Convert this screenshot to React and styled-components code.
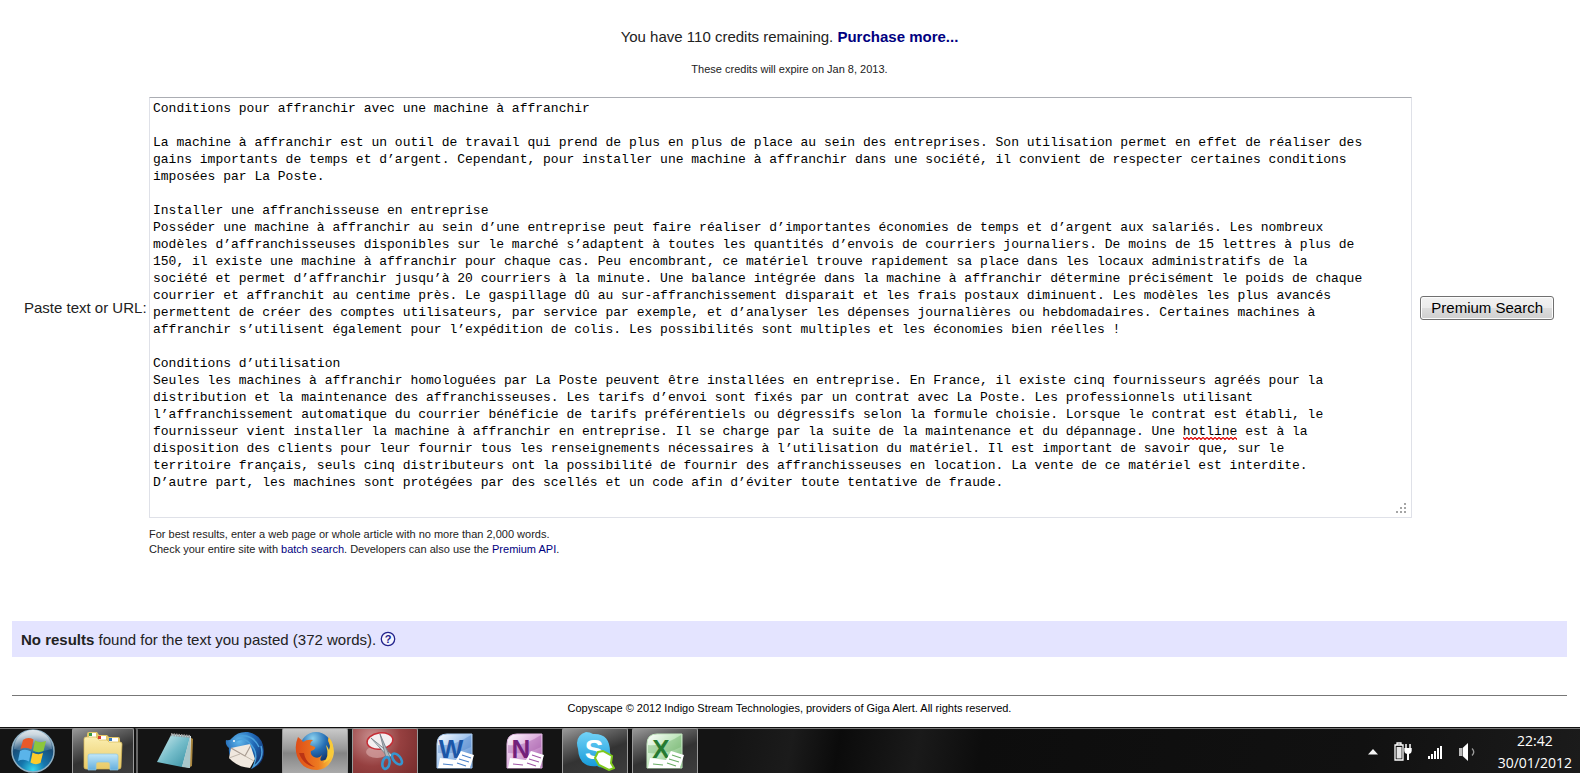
import { useState } from "react";
import styled, { createGlobalStyle, css } from "styled-components";

const ARTICLE = `Conditions pour affranchir avec une machine à affranchir

La machine à affranchir est un outil de travail qui prend de plus en plus de place au sein des entreprises. Son utilisation permet en effet de réaliser des
gains importants de temps et d’argent. Cependant, pour installer une machine à affranchir dans une société, il convient de respecter certaines conditions
imposées par La Poste.

Installer une affranchisseuse en entreprise
Posséder une machine à affranchir au sein d’une entreprise peut faire réaliser d’importantes économies de temps et d’argent aux salariés. Les nombreux
modèles d’affranchisseuses disponibles sur le marché s’adaptent à toutes les quantités d’envois de courriers journaliers. De moins de 15 lettres à plus de
150, il existe une machine à affranchir pour chaque cas. Peu encombrant, ce matériel trouve rapidement sa place dans les locaux administratifs de la
société et permet d’affranchir jusqu’à 20 courriers à la minute. Une balance intégrée dans la machine à affranchir détermine précisément le poids de chaque
courrier et affranchit au centime près. Le gaspillage dû au sur-affranchissement disparait et les frais postaux diminuent. Les modèles les plus avancés
permettent de créer des comptes utilisateurs, par service par exemple, et d’analyser les dépenses journalières ou hebdomadaires. Certaines machines à
affranchir s’utilisent également pour l’expédition de colis. Les possibilités sont multiples et les économies bien réelles !

Conditions d’utilisation
Seules les machines à affranchir homologuées par La Poste peuvent être installées en entreprise. En France, il existe cinq fournisseurs agréés pour la
distribution et la maintenance des affranchisseuses. Les tarifs d’envoi sont fixés par un contrat avec La Poste. Les professionnels utilisant
l’affranchissement automatique du courrier bénéficie de tarifs préférentiels ou dégressifs selon la formule choisie. Lorsque le contrat est établi, le
fournisseur vient installer la machine à affranchir en entreprise. Il se charge par la suite de la maintenance et du dépannage. Une hotline est à la
disposition des clients pour leur fournir tous les renseignements nécessaires à l’utilisation du matériel. Il est important de savoir que, sur le
territoire français, seuls cinq distributeurs ont la possibilité de fournir des affranchisseuses en location. La vente de ce matériel est interdite.
D’autre part, les machines sont protégées par des scellés et un code afin d’éviter toute tentative de fraude.
`;

const LINE = 17;

function locate(text, word) {
    const lines = text.split("\n");
    const row = lines.findIndex(line => line.includes(word));
    if (row < 0) return null;
    return { row, col: lines[row].indexOf(word), length: word.length };
}

export default function App() {
    const [text, setText] = useState(ARTICLE);
    const typo = locate(text, "hotline");

    return (
        <Page>
            <GlobalStyle />
            <Main>
                <Credits>You have 110 credits remaining. <BoldLink href="#purchase">Purchase more...</BoldLink></Credits>
                <Expiry>These credits will expire on Jan 8, 2013.</Expiry>

                <SearchForm onSubmit={e => e.preventDefault()}>
                    <FieldLabel htmlFor="content">Paste text or URL:</FieldLabel>
                    <TextWrap>
                        <TextBox
                            id="content"
                            wrap="off"
                            spellCheck={false}
                            value={text}
                            onChange={e => setText(e.target.value)}
                        />
                        {typo &&
                            <Squiggle style={{
                                left: `calc(4px + ${typo.col}ch)`,
                                top: `${(typo.row + 1) * LINE}px`,
                                width: `${typo.length}ch`
                            }}>
                                <svg width="100%" height="3">
                                    <defs>
                                        <pattern id="wave" width="4" height="3" patternUnits="userSpaceOnUse">
                                            <path d="M-1 -.5 L2 2.5 L5 -.5" fill="none" stroke="#d00" strokeWidth="1.2" />
                                        </pattern>
                                    </defs>
                                    <rect width="100%" height="3" fill="url(#wave)" />
                                </svg>
                            </Squiggle>
                        }
                        <Grip />
                    </TextWrap>
                    <SearchButton type="submit">Premium Search</SearchButton>
                    <Notes>
                        For best results, enter a web page or whole article with no more than 2,000 words.<br />
                        Check your entire site with <Link href="#batch">batch search</Link>. Developers can also use the <Link href="#api">Premium API</Link>.
                    </Notes>
                </SearchForm>

                <Results>
                    <span><b>No results</b> found for the text you pasted (372 words).</span>
                    <HelpLink href="#help" aria-label="Help">
                        <svg width="16" height="16" viewBox="0 0 16 16">
                            <circle cx="8" cy="8" r="6.7" fill="#f4f4ff" stroke="#22228c" strokeWidth="1.3" />
                            <text x="8" y="12" textAnchor="middle" fontSize="11" fontWeight="bold" fill="#22228c">?</text>
                        </svg>
                    </HelpLink>
                </Results>

                <Footer>Copyscape © 2012 Indigo Stream Technologies, providers of Giga Alert. All rights reserved.</Footer>
            </Main>
            <Taskbar />
        </Page>
    );
}

function Grip() {
    const dots = [[8, 0], [4, 4], [8, 4], [0, 8], [4, 8], [8, 8]];
    return (
        <GripIcon width="11" height="11" viewBox="0 0 11 11">
            {dots.map(([x, y]) => <rect key={`${x}-${y}`} x={x} y={y} width="2" height="2" fill="#a5a5a5" />)}
        </GripIcon>
    );
}

function Taskbar() {
    return (
        <Bar>
            <StartButton aria-label="Start"><StartIcon /></StartButton>
            <Apps>
                <AppButton $tone="open" $stacked aria-label="Explorer"><ExplorerIcon /></AppButton>
                <AppButton aria-label="Notepad"><NotepadIcon /></AppButton>
                <AppButton aria-label="Thunderbird"><ThunderbirdIcon /></AppButton>
                <AppButton $tone="active" aria-label="Firefox"><FirefoxIcon /></AppButton>
                <AppButton $tone="red" aria-label="Snipping Tool"><SnipIcon /></AppButton>
                <AppButton aria-label="Word"><WordIcon /></AppButton>
                <AppButton aria-label="OneNote"><OneNoteIcon /></AppButton>
                <AppButton $tone="open" aria-label="Skype"><SkypeIcon /></AppButton>
                <AppButton $tone="open" aria-label="Excel"><ExcelIcon /></AppButton>
            </Apps>
            <Tray>
                <TrayButton aria-label="Show hidden icons">
                    <svg width="10" height="6" viewBox="0 0 10 6"><path d="M5 0 L10 5.5 H0 Z" fill="#f4f4f4" /></svg>
                </TrayButton>
                <TrayButton aria-label="Battery">
                    <svg width="18" height="20" viewBox="0 0 18 20">
                        <path d="M3 3 V1 H7 V3 M1 3 H9 V18 H1 Z" fill="none" stroke="#fff" strokeWidth="1.3" />
                        <rect x="2.6" y="5" width="5" height="11.5" fill="#e4e4e4" />
                        <path d="M12 2 V6 M16 2 V6" stroke="#fff" strokeWidth="1.5" />
                        <path d="M10.3 6 H17.7 V9 Q17.7 11.5 15 12 V18 H13 V12 Q10.3 11.5 10.3 9 Z" fill="#fff" />
                    </svg>
                </TrayButton>
                <TrayButton aria-label="Network">
                    <svg width="15" height="14" viewBox="0 0 15 14">
                        {[3, 5, 8, 11, 13].map((h, i) => <rect key={h} x={i * 3} y={14 - h} width="2" height={h} fill="#fff" />)}
                    </svg>
                </TrayButton>
                <TrayButton aria-label="Volume">
                    <svg width="17" height="18" viewBox="0 0 17 18">
                        <path d="M0 5 H3 V13 H0 Z" fill="#bbb" />
                        <path d="M3.6 5 L9 0 V18 L3.6 13 Z" fill="#fff" />
                        <path d="M13 5.5 Q16.5 9 13 12.5" fill="none" stroke="#999" strokeWidth="1.3" />
                    </svg>
                </TrayButton>
                <Clock>
                    <span>22:42</span>
                    <span>30/01/2012</span>
                </Clock>
            </Tray>
        </Bar>
    );
}

function StartIcon() {
    return (
        <svg width="44" height="44" viewBox="0 0 44 44">
            <defs>
                <radialGradient id="orb" cx=".5" cy=".95" r=".85">
                    <stop offset="0" stopColor="#35d6ee" />
                    <stop offset=".35" stopColor="#1576ad" />
                    <stop offset=".75" stopColor="#184d78" />
                    <stop offset="1" stopColor="#7d9bb0" />
                </radialGradient>
                <linearGradient id="gloss" x1="0" y1="0" x2="0" y2="1">
                    <stop offset="0" stopColor="#fff" stopOpacity=".75" />
                    <stop offset="1" stopColor="#fff" stopOpacity=".1" />
                </linearGradient>
            </defs>
            <circle cx="22" cy="22" r="21" fill="url(#orb)" stroke="#8fb0c4" strokeWidth="1.5" />
            <path d="M3 20 A19 19 0 0 1 41 20 Q22 26 3 20 Z" fill="url(#gloss)" />
            <path d="M12 11 Q17 7.500 22.500 10.500 L20.500 20.500 Q15 17.500 9.500 20 Z" fill="#e8592a" />
            <path d="M24 11.500 Q29 14.500 35 12 L32.500 22 Q27 24.500 22 21.500 Z" fill="#8cc63c" />
            <path d="M9 22 Q14.500 19.500 20 22.500 L18 32.500 Q12.500 29.500 7 32 Z" fill="#5ab4ea" />
            <path d="M21.500 23.500 Q27 26.500 32 24 L29.500 34 Q24.500 36.500 19.500 33.500 Z" fill="#fccb2c" />
        </svg>
    );
}

function ExplorerIcon() {
    return (
        <svg width="40" height="40" viewBox="0 0 40 40">
            <defs>
                <linearGradient id="folder" x1="0" y1="0" x2="0" y2="1">
                    <stop offset="0" stopColor="#fbeeb0" />
                    <stop offset="1" stopColor="#e8ca67" />
                </linearGradient>
                <linearGradient id="stand" x1="0" y1="0" x2="0" y2="1">
                    <stop offset="0" stopColor="#c3e8f8" />
                    <stop offset="1" stopColor="#63aede" />
                </linearGradient>
            </defs>
            <path d="M4 3 Q4 1 6 1 H14 L16 4 H24 L26 6 H35 Q37 6 37 8 V33 H4 Z" fill="#e3c767" />
            <rect x="6" y="2" width="7" height="4" fill="#fff" /><rect x="6" y="2" width="3" height="3" fill="#379b46" />
            <rect x="15" y="5" width="8" height="4" fill="#fff" /><rect x="15" y="5" width="3" height="3" fill="#d93c2c" />
            <rect x="26" y="7" width="9" height="4" fill="#fff" /><rect x="26" y="7" width="3" height="3" fill="#3778bd" />
            <path d="M1 8 Q1 6 3 6 H13 L16 9 H24 L26 11 H37 Q39 11 39 13 L38 36 Q38 38 36 38 H3 Q1 38 1 36 Z" fill="url(#folder)" stroke="#d7b957" strokeWidth=".7" />
            <path d="M5 39 V25 Q5 23 7 23 H33 Q35 23 35 25 V39 H27 V33 Q27 31 25 31 H15 Q13 31 13 33 V39 Z" fill="url(#stand)" stroke="#8cc5e4" strokeWidth=".7" />
        </svg>
    );
}

function NotepadIcon() {
    return (
        <svg width="38" height="38" viewBox="0 0 38 38">
            <defs>
                <linearGradient id="pad" x1="0" y1="0" x2="1" y2="1">
                    <stop offset="0" stopColor="#d5edf0" />
                    <stop offset=".5" stopColor="#75bdca" />
                    <stop offset="1" stopColor="#358ea1" />
                </linearGradient>
            </defs>
            <path d="M34 5 L37 7 L36 34 L32 36 Z" fill="#a9853d" />
            <path d="M15 2 L35 4 L34 36 L24 34 Z" fill="#d6e4e6" />
            <path d="M15 3 L34 5 L26 35 L1 30 Z" fill="url(#pad)" />
            <path d="M34 5 L34 36 L26 35 Z" fill="#a9c7ca" />
            <path d="M15 2.500 L34 4.500" stroke="#9e9e9e" strokeWidth="3" strokeDasharray="1.5 1" />
        </svg>
    );
}

function ThunderbirdIcon() {
    return (
        <svg width="40" height="40" viewBox="0 0 40 40">
            <defs>
                <radialGradient id="bird" cx=".35" cy=".25" r=".8">
                    <stop offset="0" stopColor="#62b9ed" />
                    <stop offset=".5" stopColor="#2068b6" />
                    <stop offset="1" stopColor="#122f6c" />
                </radialGradient>
            </defs>
            <path d="M1 9 Q5 10 7 7 Q13 0 23 1 Q38 4 39 20 Q39 34 26 38 Q32 33 31 27 L8 29 Q3 24 4 17 Q0 14 1 9 Z" fill="url(#bird)" />
            <path d="M6 17 L25 13 L30 28 L25 37 Q12 36 4 27 Z" fill="#f0e8df" />
            <path d="M6 17 L20 25 L26 14" fill="none" stroke="#a99c92" strokeWidth="1.2" />
            <path d="M4 27 L15 23 M20 25 L29 30" stroke="#c1b7ac" />
            <path d="M9 11 Q19 4 27 15 Q34 24 28 36 Q40 28 36 15 M14 5 Q28 3 34 16" fill="none" stroke="#4aa0dc" strokeWidth="1.5" />
            <circle cx="9" cy="10" r="1" fill="#fff" />
        </svg>
    );
}

function FirefoxIcon() {
    return (
        <svg width="40" height="40" viewBox="0 0 40 40">
            <defs>
                <radialGradient id="globe" cx=".4" cy=".2" r=".8">
                    <stop offset="0" stopColor="#8bd1ef" />
                    <stop offset=".5" stopColor="#266fb5" />
                    <stop offset="1" stopColor="#102f66" />
                </radialGradient>
                <linearGradient id="fox" x1="0" y1="0" x2="1" y2="0">
                    <stop offset="0" stopColor="#de4d18" />
                    <stop offset=".6" stopColor="#ee7b20" />
                    <stop offset="1" stopColor="#fbd044" />
                </linearGradient>
            </defs>
            <circle cx="21" cy="17" r="16" fill="url(#globe)" />
            <path d="M3 6 Q7 9 8 11 Q12 8 18 9 Q15 11 15 14 L20 16 Q21 18 16 20 Q15 24 19 26 Q24 28 27 24 Q22 33 32 28 Q38 22 34 12 Q32 9 34 6 Q41 18 38 26 Q34 38 22 39 Q7 39 2 25 Q-1 15 3 6 Z" fill="url(#fox)" />
            <path d="M34 7 Q36 14 34 19 Q33 16 31 14 Q35 26 28 32 Q37 29 38 20 Q39 12 34 7 Z" fill="#f9cb37" />
            <path d="M4 22 Q8 34 20 36 Q10 31 9 22 Z" fill="#bb3414" />
        </svg>
    );
}

function SnipIcon() {
    return (
        <svg width="40" height="40" viewBox="0 0 40 40">
            <ellipse cx="12" cy="21" rx="11" ry="6" fill="#d6a4a4" opacity=".7" />
            <ellipse cx="15" cy="10" rx="13" ry="8" transform="rotate(-8 15 10)" fill="#f3eff0" stroke="#c62d35" strokeWidth="1.500" />
            <path d="M6 7 L27 24 L24 27 Z" fill="#d5dade" stroke="#6d7880" strokeWidth=".8" />
            <path d="M15 3 L25 26 L21 27 Z" fill="#aeb7bd" stroke="#6d7880" strokeWidth=".8" />
            <ellipse cx="21" cy="32" rx="3.500" ry="6" transform="rotate(12 21 32)" fill="none" stroke="#3796cf" strokeWidth="2.6" />
            <ellipse cx="32" cy="28" rx="3.500" ry="6.500" transform="rotate(-40 32 28)" fill="none" stroke="#3796cf" strokeWidth="2.6" />
        </svg>
    );
}

// shared tile for the Office programs: coloured page, big letter, sheet in the corner
function OfficeIcon({ id, letter, light, mid, dark }) {
    return (
        <svg width="38" height="36" viewBox="0 0 38 36">
            <defs>
                <linearGradient id={id} x1="0" y1="0" x2="1" y2="1">
                    <stop offset="0" stopColor="#fff" />
                    <stop offset=".45" stopColor={light} />
                    <stop offset="1" stopColor={mid} />
                </linearGradient>
            </defs>
            <path d="M1 35 V11 Q1 1 11 1 H36 V35 Z" fill={`url(#${id})`} stroke={light} />
            <path d="M2 12 Q17 14 35 2 V14 Q20 22 2 20 Z" fill={mid} opacity=".4" />
            <OfficeLetter x="15" y="25" textAnchor="middle" fill={dark}>{letter}</OfficeLetter>
            <path d="M4 25 L20 27 L25 18 L38 22 L34 35 H2 Z" fill="#fff" />
            <path d="M26 22 L35 25 M23 26 L33 29 M21 30 L30 33 M7 31 L17 32" stroke={mid} strokeWidth="1.2" />
        </svg>
    );
}

const WordIcon = () => <OfficeIcon id="word" letter="W" light="#a8c9ef" mid="#4a80c8" dark="#1b57a8" />;
const OneNoteIcon = () => <OfficeIcon id="onenote" letter="N" light="#dfb4e0" mid="#a056a6" dark="#73207b" />;
const ExcelIcon = () => <OfficeIcon id="excel" letter="X" light="#c3e7c0" mid="#69ad65" dark="#267a32" />;

function SkypeIcon() {
    return (
        <svg width="40" height="40" viewBox="0 0 40 40">
            <defs>
                <linearGradient id="skype" x1="0" y1="0" x2="0" y2="1">
                    <stop offset="0" stopColor="#73d3f7" />
                    <stop offset="1" stopColor="#1499d9" />
                </linearGradient>
            </defs>
            <path d="M11 1 Q15 1 18 3 Q35 2 35 21 Q38 31 31 35 Q27 38 22 35 Q4 37 3 18 Q-1 5 11 1 Z" fill="url(#skype)" />
            <SkypeLetter x="19" y="28" textAnchor="middle">S</SkypeLetter>
            <path d="M23 21 L28 20 L37 25 L36 32 L39 37 L34 39 L24 34 L20 27 Z" fill="#fff" stroke="#7fc91c" strokeWidth="2" />
        </svg>
    );
}

const GlobalStyle = createGlobalStyle`
    body{
        margin: 0;
        background: #fff;
        color: #222;
        font-family: "Liberation Sans", Arial, sans-serif;
        font-size: 15px;
    }
    *{
        box-sizing: border-box;
    }
    button, svg text{
        font-family: inherit;
    }
`

const Page = styled.div`
    display: flex;
    flex-direction: column;
    min-height: 100vh;
`

const Main = styled.main`
    flex: 1;
    padding: 28px 13px 0 12px;
`

const Credits = styled.p`
    margin: 0;
    line-height: 18px;
    text-align: center;
`

const Expiry = styled.p`
    margin: 16px 0 20px;
    font-size: 11px;
    line-height: 15px;
    text-align: center;
`

const Link = styled.a`
    color: #000080;
    text-decoration: none;
    &:hover{
        text-decoration: underline;
    }
`

const BoldLink = styled(Link)`
    font-weight: bold;
`

const SearchForm = styled.form`
    display: grid;
    grid-template-columns: 117px 1fr auto;
    align-items: center;
    column-gap: 8px;
    row-gap: 9px;
    padding: 0 13px 0 12px;
`

const FieldLabel = styled.label`
    white-space: nowrap;
`

const monoText = css`
    font-family: "Liberation Mono", "Courier New", monospace;
    font-size: 13px;
    line-height: ${LINE}px;
`

const TextWrap = styled.div`
    position: relative;
    ${monoText}
`

const TextBox = styled.textarea`
    display: block;
    width: 100%;
    height: 421px;
    padding: 2px 3px;
    border: 1px solid #dfe1e8;
    border-top-color: #abadb3;
    border-radius: 1px;
    background: #fff;
    color: #000;
    resize: none;
    overflow: hidden;
    outline: none;
    ${monoText}
`

const Squiggle = styled.span`
    position: absolute;
    height: 3px;
    line-height: 0;
    pointer-events: none;
`

const GripIcon = styled.svg`
    position: absolute;
    right: 5px;
    bottom: 4px;
`

const SearchButton = styled.button`
    height: 24px;
    padding: 0 10px;
    border: 1px solid #707070;
    border-radius: 3px;
    background: linear-gradient(#f2f2f2, #ebebeb 50%, #dddddd 50%, #cfcfcf);
    box-shadow: inset 0 0 0 1px #fcfcfc;
    color: #000;
    font-size: 15px;
    cursor: pointer;
`

const Notes = styled.p`
    grid-column: 2;
    margin: 0;
    font-size: 11px;
    line-height: 15px;
`

const Results = styled.section`
    display: flex;
    align-items: center;
    gap: 4px;
    height: 36px;
    margin-top: 64px;
    padding: 0 9px;
    background: #e4e4ff;
`

const HelpLink = styled(Link)`
    display: flex;
`

const Footer = styled.footer`
    margin-top: 38px;
    padding: 5px 0 10px;
    border-top: 1px solid #777;
    color: #000;
    font-size: 11px;
    line-height: 15px;
    text-align: center;
`

const Bar = styled.nav`
    display: flex;
    height: 46px;
    overflow: hidden;
    border-top: 1px solid #111;
    box-shadow: inset 0 1px #777;
    background: linear-gradient(100deg, #141414 46%, #1b1b1b 50%, #0b0b0b 53%, #1a1a1a 58%, #0d0d0d 62%, #111 86%, #1b1b1b);
`

const plainButton = css`
    display: flex;
    align-items: center;
    justify-content: center;
    padding: 0;
    border: none;
    background: none;
`

const StartButton = styled.button`
    ${plainButton}
    width: 66px;
`

const Apps = styled.div`
    display: flex;
    gap: 4px;
    padding-left: 6px;
`

const tones = {
    open: "linear-gradient(160deg, #999 0%, #666 25%, #333 55%, #3d3d3d 100%)",
    active: "linear-gradient(#c9c9c9, #999 45%, #858585 55%, #aaa)",
    red: "radial-gradient(circle at 30% 20%, #c98f8f, #964040 50%, #762c2c)"
};

const AppButton = styled.button`
    ${plainButton}
    width: 66px;
    ${({ $tone }) => $tone && css`
        background: ${tones[$tone]};
        border: 1px solid #9a9a9a;
        border-bottom: none;
        border-radius: 2px 2px 0 0;
    `}
    ${({ $stacked }) => $stacked && css`
        width: 62px;
        margin-right: 4px;
        box-shadow: 2px 0 #111, 4px 0 #666;
    `}
`

const OfficeLetter = styled.text`
    font-size: 26px;
    font-weight: bold;
`

const SkypeLetter = styled.text`
    font-size: 28px;
    font-weight: bold;
    fill: #fff;
`

const Tray = styled.div`
    display: flex;
    align-items: center;
    gap: 16px;
    margin-left: auto;
    padding-right: 8px;
`

const TrayButton = styled.button`
    ${plainButton}
    padding-top: 2px;
`

const Clock = styled.time`
    display: flex;
    flex-direction: column;
    align-items: center;
    padding: 2px 0 0 6px;
    color: #fff;
    font-family: "Open Sans", "Noto Sans", sans-serif;
    font-size: 14px;
    line-height: 22px;
`
